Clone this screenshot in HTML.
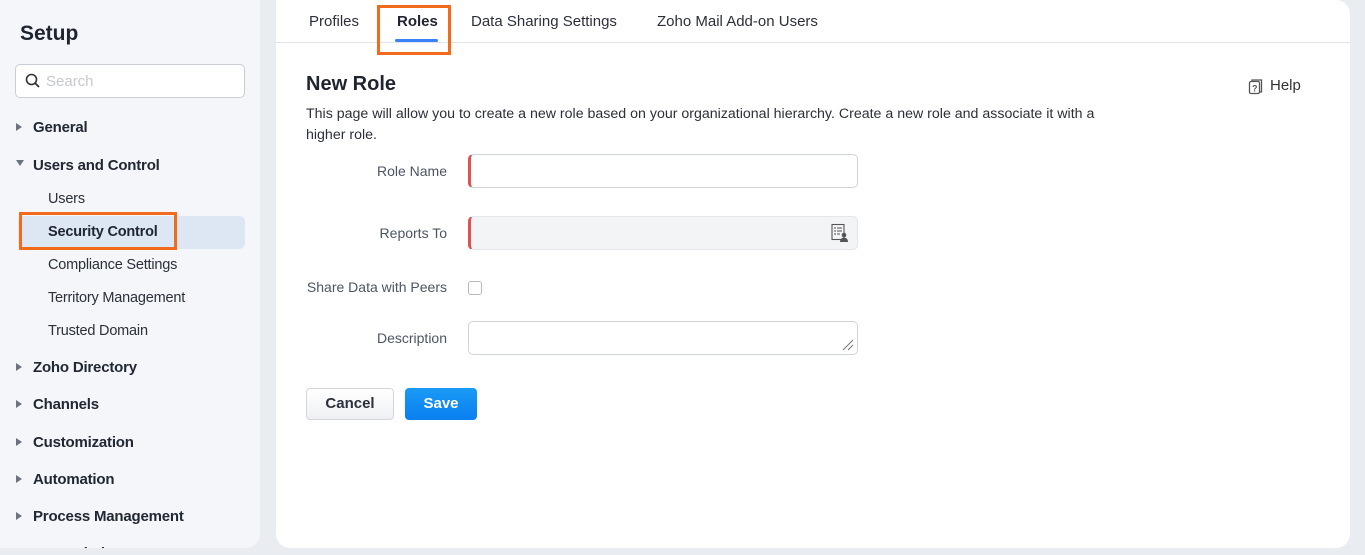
<!DOCTYPE html>
<html><head><meta charset="utf-8"><style>
*{margin:0;padding:0;box-sizing:border-box}
html,body{width:1365px;height:555px;overflow:hidden}
body{background:#e9edf2;font-family:"Liberation Sans",sans-serif;position:relative;color:#1f2430}
.abs{position:absolute}
#side{left:0;top:0;width:260px;height:548px;background:#f4f6f9;border-radius:0 0 14px 0;overflow:hidden}
#main{left:276px;top:0;width:1074px;height:548px;background:#fff;border-radius:0 14px 14px 14px}
.g{position:absolute;left:33px;font-size:15px;font-weight:bold;color:#222833;letter-spacing:-0.2px}
.tri{position:absolute;left:16px;width:0;height:0;border-top:4px solid transparent;border-bottom:4px solid transparent;border-left:6px solid #6b7280}
.s{position:absolute;left:48px;font-size:14.5px;color:#2b303a;letter-spacing:-0.2px}
.lbl{position:absolute;font-size:14px;color:#4b5563;text-align:right;right:918px;white-space:nowrap}
.inp{position:absolute;left:468px;width:390px;border:1px solid #cfd4da;border-radius:5px;background:#fff}
.req{border-left:3px solid #e05252}
.tab{position:absolute;top:13px;font-size:15px;color:#2b303a}
</style></head><body>
<div id="side" class="abs">
<div class="abs" style="left:20px;top:22px;font-size:21px;font-weight:bold;color:#1f2430">Setup</div>
<div class="abs" style="left:15px;top:64px;width:230px;height:34px;border:1px solid #c9ced6;border-radius:5px;background:#fff"></div>
<svg class="abs" style="left:25px;top:73px" width="16" height="16" viewBox="0 0 16 16"><circle cx="6.5" cy="6.5" r="5" fill="none" stroke="#333" stroke-width="1.6"/><path d="M10.3 10.3L14 14" stroke="#333" stroke-width="1.8"/></svg>
<div class="abs" style="left:46px;top:73px;font-size:15px;color:#c5c9cf">Search</div>
<div class="tri" style="top:123px"></div><div class="g" style="top:119px">General</div>
<div class="abs" style="left:16px;top:160px;width:0;height:0;border-left:4px solid transparent;border-right:4px solid transparent;border-top:6px solid #6b7280"></div>
<div class="g" style="top:157px">Users and Control</div>
<div class="s" style="top:191px">Users</div>
<div class="abs" style="left:18px;top:216px;width:227px;height:33px;background:#dce7f3;border-radius:6px"></div>
<div class="abs" style="left:19px;top:212px;width:158px;height:38px;border:3px solid #f26a1b"></div>
<div class="s" style="top:224px;font-weight:bold;color:#1f2430">Security Control</div>
<div class="s" style="top:257px">Compliance Settings</div>
<div class="s" style="top:290px">Territory Management</div>
<div class="s" style="top:323px">Trusted Domain</div>
<div class="tri" style="top:363px"></div><div class="g" style="top:359px">Zoho Directory</div>
<div class="tri" style="top:400px"></div><div class="g" style="top:396px">Channels</div>
<div class="tri" style="top:438px"></div><div class="g" style="top:434px">Customization</div>
<div class="tri" style="top:475px"></div><div class="g" style="top:471px">Automation</div>
<div class="tri" style="top:512px"></div><div class="g" style="top:508px">Process Management</div>
<div class="g" style="top:545px">Data Admin</div>
</div>
<div id="main" class="abs"></div>
<div class="abs" style="left:276px;top:42px;width:1074px;height:1px;background:#e1e4e8"></div>
<div class="tab" style="left:309px">Profiles</div>
<div class="tab" style="left:397px;font-weight:bold;color:#1f2430">Roles</div>
<div class="abs" style="left:395px;top:39px;width:43px;height:3px;background:#3b82f6;border-radius:2px"></div>
<div class="abs" style="left:377px;top:5px;width:74px;height:50px;border:3px solid #f26a1b"></div>
<div class="tab" style="left:471px">Data Sharing Settings</div>
<div class="tab" style="left:657px">Zoho Mail Add-on Users</div>
<div class="abs" style="left:306px;top:73px;font-size:20px;font-weight:bold;color:#1f2430">New Role</div>
<svg class="abs" style="left:1248px;top:78px" width="16" height="17" viewBox="0 0 16 17"><rect x="1.5" y="3.5" width="10" height="12" rx="1.5" fill="none" stroke="#555" stroke-width="1.3"/><path d="M4 3.5V2h9.5v12H11.5" fill="none" stroke="#555" stroke-width="1.3"/><text x="4" y="13.5" font-size="9" font-family="Liberation Sans" fill="#555" font-weight="bold">?</text></svg>
<div class="abs" style="left:1270px;top:77px;font-size:15px;color:#333">Help</div>
<div class="abs" style="left:306px;top:104px;width:820px;font-size:14.2px;line-height:21px;color:#2b303a">This page will allow you to create a new role based on your organizational hierarchy. Create a new role and associate it with a higher role.</div>
<div class="lbl" style="top:163px">Role Name</div>
<div class="inp req" style="top:154px;height:34px"></div>
<div class="lbl" style="top:225px">Reports To</div>
<div class="inp req" style="top:216px;height:34px;background:#f2f4f6;border-color:#e3e6ea;border-left-color:#e05252"></div>
<svg class="abs" style="left:830px;top:223px" width="20" height="20" viewBox="0 0 20 20"><rect x="2" y="1.5" width="12" height="15" fill="none" stroke="#555" stroke-width="1.1"/><path d="M4 5h2M7 5h5M4 8h2M7 8h5M4 11h2M7 11h3" stroke="#555" stroke-width="1"/><circle cx="14" cy="12" r="2.3" fill="#555"/><path d="M10 19c0-3 2-4.5 4-4.5s4 1.5 4 4.5z" fill="#555"/></svg>
<div class="lbl" style="top:279px">Share Data with Peers</div>
<div class="abs" style="left:468px;top:281px;width:14px;height:14px;border:1.5px solid #b5bac2;border-radius:3px"></div>
<div class="lbl" style="top:330px">Description</div>
<div class="inp" style="top:321px;height:34px"></div>
<svg class="abs" style="left:840px;top:337px" width="14" height="14"><path d="M3 13L13 3M8 13L13 8" stroke="#777" stroke-width="1"/></svg>
<div class="abs" style="left:306px;top:388px;width:88px;height:32px;border:1px solid #d3d7dd;border-radius:4px;background:linear-gradient(#fff,#eef0f3);font-size:15px;font-weight:bold;color:#2b303a;text-align:center;line-height:30px">Cancel</div>
<div class="abs" style="left:405px;top:388px;width:72px;height:32px;border-radius:4px;background:linear-gradient(#1a9af5,#0a7ff0);font-size:15px;font-weight:bold;color:#fff;text-align:center;line-height:32px">Save</div>
</body></html>
